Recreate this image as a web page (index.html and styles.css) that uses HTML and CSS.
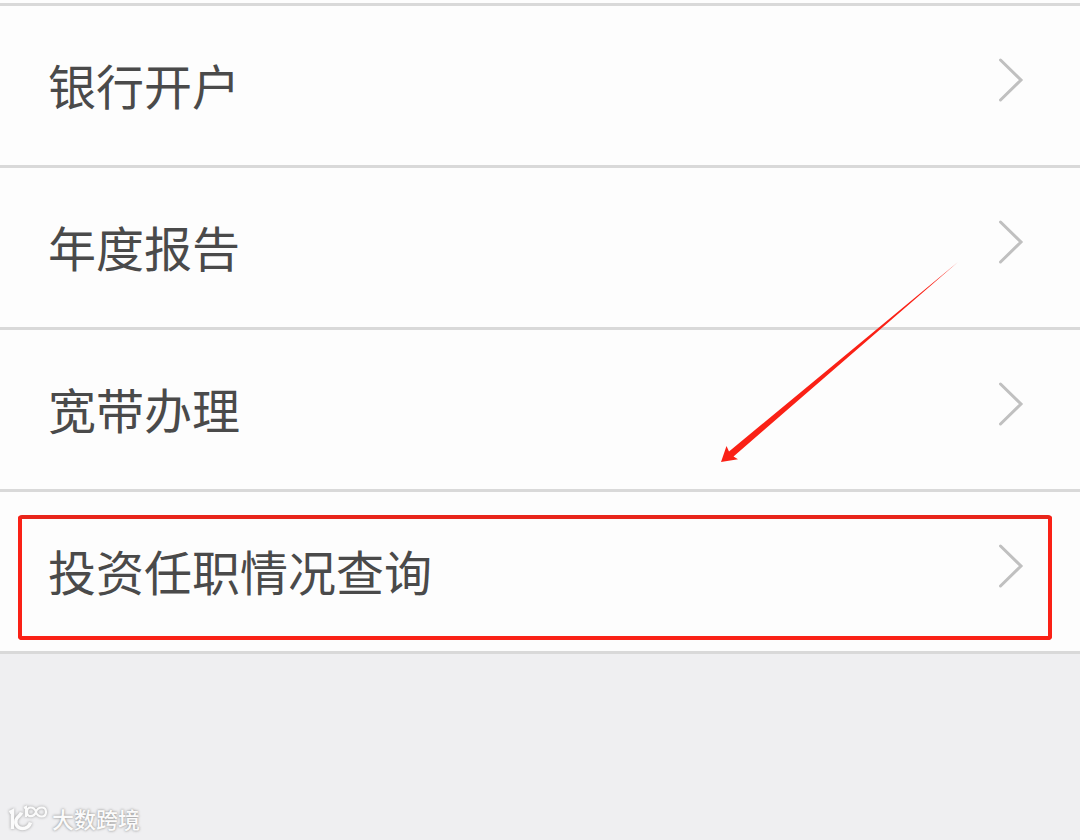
FILE: index.html
```html
<!DOCTYPE html>
<html lang="zh-CN">
<head>
    <meta charset="UTF-8">
    <meta name="viewport" content="width=device-width, initial-scale=1.0">
    <title>企业服务</title>
    <link rel="stylesheet" href="styles.css">
</head>
<body>
    <ul class="service-list">
        <li class="service-item">
            <span class="service-name">银行开户</span>
            <svg class="chevron" viewBox="0 0 26 46"><path d="M2.5 3 L23 23 L2.5 43"/></svg>
        </li>
        <li class="service-item">
            <span class="service-name">年度报告</span>
            <svg class="chevron" viewBox="0 0 26 46"><path d="M2.5 3 L23 23 L2.5 43"/></svg>
        </li>
        <li class="service-item">
            <span class="service-name">宽带办理</span>
            <svg class="chevron" viewBox="0 0 26 46"><path d="M2.5 3 L23 23 L2.5 43"/></svg>
        </li>
        <li class="service-item">
            <span class="service-name">投资任职情况查询</span>
            <svg class="chevron" viewBox="0 0 26 46"><path d="M2.5 3 L23 23 L2.5 43"/></svg>
            <div class="highlight"></div>
        </li>
    </ul>

    <svg class="arrow" viewBox="0 0 240 204">
        <path d="M238 0 L13.5 194.5 L18 197.3 L1 200 L6.5 184 L9 189.5 Z"/>
    </svg>

    <div class="watermark">
        <svg class="watermark-logo" viewBox="0 0 40 28">
            <path d="M0.5 7.5 L3.5 6 V24"/>
            <path d="M12.5 7.5 C11.5 11 8 11.5 7 15 C6 20 9 23.5 13.5 23.5 C18 23.5 20.5 21 21.5 17.5"/>
            <path class="thin" d="M15 3 L17 2 V12 M27 7 C25 1 18 1 18 7 C18 13 25 12 27 7 C29 1 37 1 37 7 C37 13 29 13 27 7"/>
        </svg>
        <span>大数跨境</span>
    </div>
</body>
</html>
```
FILE: styles.css
```css
* {
    box-sizing: border-box;
}

body {
    position: relative;
    height: 840px;
    margin: 0;
    overflow: hidden;
    background-color: #efeff1;
    font-family: "Noto Sans CJK SC", sans-serif;
}

.service-list {
    margin: 0;
    padding: 3px 0 0;
    list-style: none;
    background-color: #fdfdfd;
}

.service-item {
    position: relative;
    display: flex;
    justify-content: space-between;
    height: 162px;
    padding: 0 56px 0 48px;
    border-top: 3px solid #d9d9d9;
}

.service-item:last-child {
    height: 165px;
    border-bottom: 3px solid #d9d9d9;
}

.service-name {
    margin-top: 43px;
    color: #4a4a4a;
    font-size: 48px;
    line-height: 70px;
}

.chevron {
    width: 26px;
    height: 46px;
    margin-top: 51px;
    fill: none;
    stroke: #c0c0c0;
    stroke-width: 3;
    stroke-linecap: round;
}

.highlight {
    position: absolute;
    top: 23px;
    left: 18px;
    width: 1034px;
    height: 125px;
    border: 4px solid #fa2116;
    border-top-color: #e8251b;
    border-radius: 4px;
}

.arrow {
    position: absolute;
    top: 262px;
    left: 720px;
    width: 240px;
    height: 204px;
    fill: #fa2116;
}

.watermark {
    position: absolute;
    bottom: 6px;
    left: 9px;
    display: flex;
    align-items: center;
    gap: 3px;
    color: #fbfbfb;
    font-size: 22px;
    font-weight: 500;
    line-height: 32px;
    text-shadow: 0 0 3px #999, 0 0 2px #bbb;
}

.watermark span {
    margin-top: -2px;
}

.watermark-logo {
    width: 40px;
    height: 28px;
    overflow: visible;
    fill: none;
    stroke: #fbfbfb;
    stroke-width: 3.5;
    filter: drop-shadow(0 0 1.5px #999);
}

.watermark-logo .thin {
    stroke-width: 2.2;
}
```
